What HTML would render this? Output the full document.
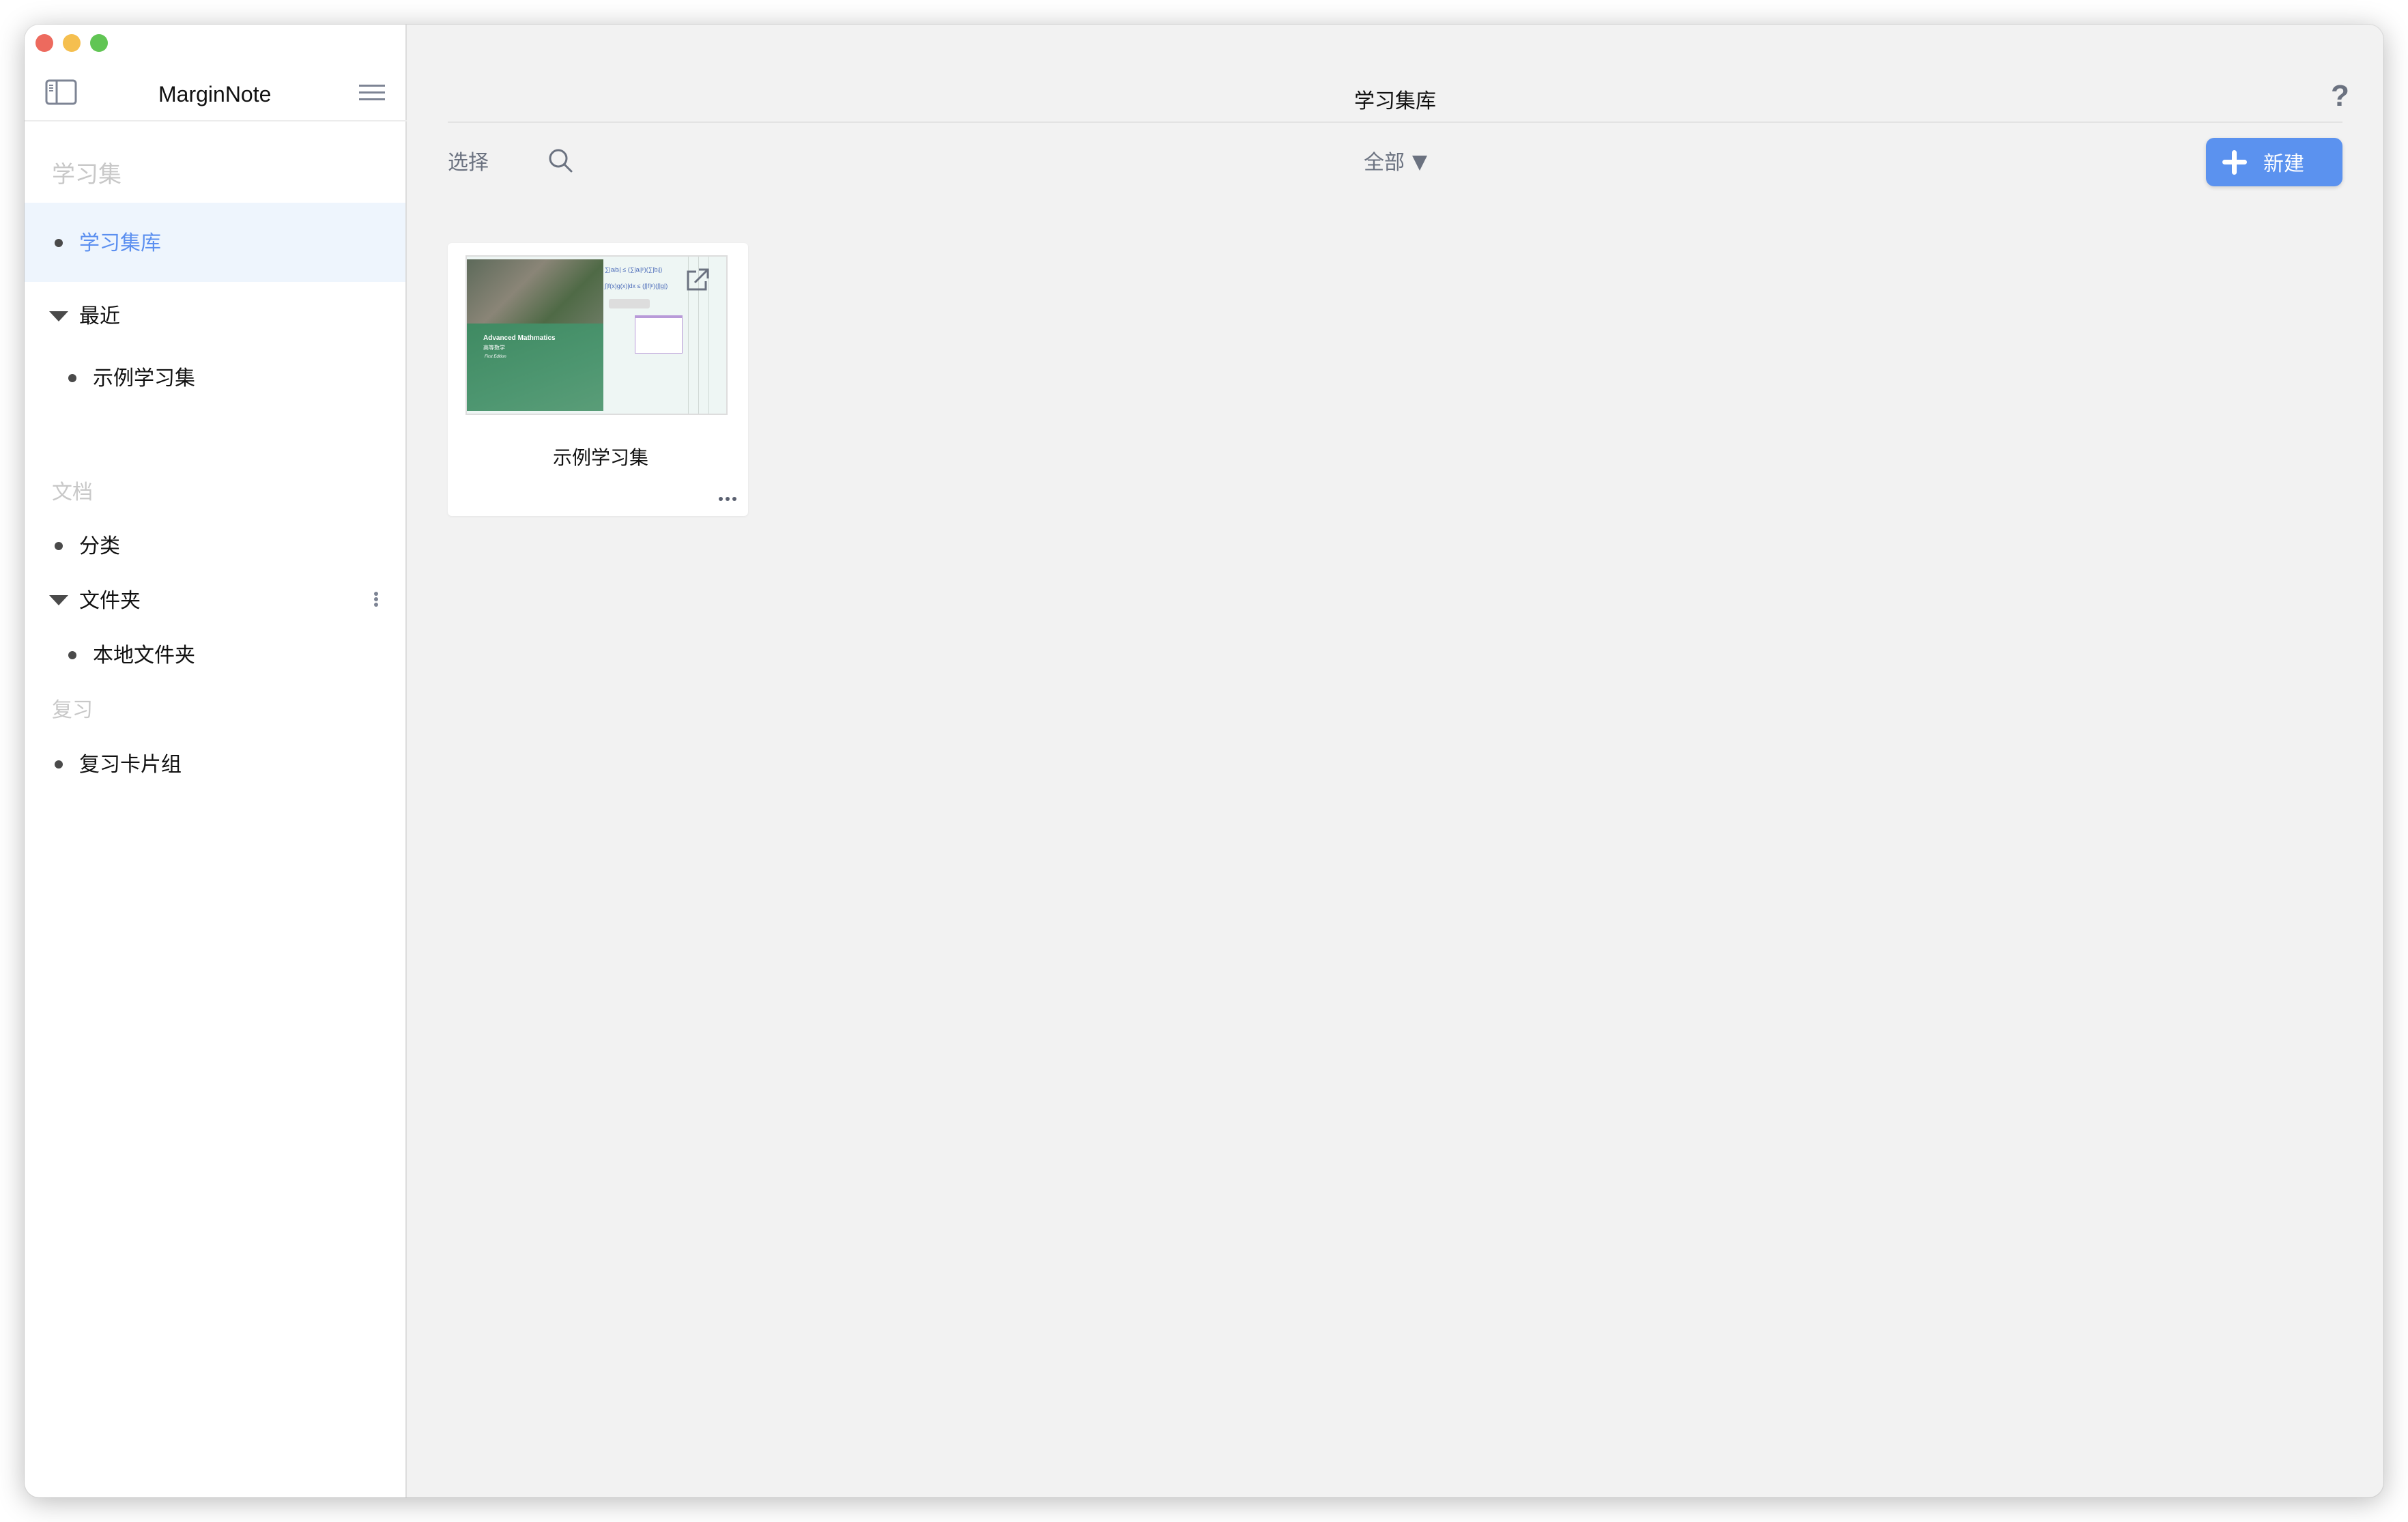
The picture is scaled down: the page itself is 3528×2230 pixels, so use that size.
<!DOCTYPE html>
<html><head><meta charset="utf-8"><style>
*{margin:0;padding:0;box-sizing:border-box}
body{width:3528px;height:2230px;background:#fff;position:relative;overflow:hidden;font-family:"Liberation Sans","Noto Sans CJK SC",sans-serif}
.win{position:absolute;left:36px;top:36px;width:3456px;height:2158px;border-radius:22px;overflow:hidden;background:#f2f2f2;box-shadow:0 6px 40px rgba(0,0,0,.28),0 0 0 1px rgba(0,0,0,.08)}
.side{position:absolute;left:0;top:0;width:560px;height:100%;background:#fff;border-right:2px solid #dcdcdc}
.a{position:absolute;white-space:nowrap}
.dot{position:absolute;width:12px;height:12px;border-radius:50%;background:#4a4a4a}
.tri{position:absolute;width:0;height:0;border-left:14px solid transparent;border-right:14px solid transparent;border-top:15px solid #4a4a4a}
.it{font-size:30px;color:#111}
.hd{font-size:30px;color:#c8c8c8}
.light{position:absolute;width:26px;height:26px;border-radius:50%}
</style></head><body>
<div class="win">
 <div class="side">
  <div class="light" style="left:16px;top:14px;background:#ed6a5e"></div>
  <div class="light" style="left:56px;top:14px;background:#f5bf4f"></div>
  <div class="light" style="left:96px;top:14px;background:#61c554"></div>
  <svg class="a" style="left:30px;top:80px" width="48" height="40" viewBox="0 0 48 40"><rect x="2" y="2" width="43" height="34" rx="4" fill="none" stroke="#7d8494" stroke-width="3"/><line x1="17" y1="2" x2="17" y2="36" stroke="#7d8494" stroke-width="3"/><line x1="6" y1="9" x2="12" y2="9" stroke="#7d8494" stroke-width="2"/><line x1="6" y1="13" x2="12" y2="13" stroke="#7d8494" stroke-width="2"/><line x1="6" y1="17" x2="12" y2="17" stroke="#7d8494" stroke-width="2"/></svg>
  <div class="a" style="left:196px;top:84px;font-size:32px;color:#111">MarginNote</div>
  <svg class="a" style="left:490px;top:86px" width="40" height="28"><rect x="0" y="2" width="38" height="3" fill="#7d8494"/><rect x="0" y="12" width="38" height="3" fill="#7d8494"/><rect x="0" y="22" width="38" height="3" fill="#7d8494"/></svg>
  <div class="a" style="left:0;top:140px;width:560px;height:2px;background:#ececec"></div>
  <div class="a hd" style="left:40px;top:192px;font-size:34px">学习集</div>
  <div class="a" style="left:0;top:261px;width:558px;height:116px;background:#eef5fd"></div>
  <div class="dot" style="left:44px;top:314px"></div>
  <div class="a it" style="left:80px;top:295px;color:#5b8ff0">学习集库</div>
  <div class="tri" style="left:36px;top:420px"></div>
  <div class="a it" style="left:80px;top:402px">最近</div>
  <div class="dot" style="left:64px;top:512px"></div>
  <div class="a it" style="left:100px;top:493px">示例学习集</div>
  <div class="a hd" style="left:40px;top:660px">文档</div>
  <div class="dot" style="left:44px;top:758px"></div>
  <div class="a it" style="left:80px;top:739px">分类</div>
  <div class="tri" style="left:36px;top:836px"></div>
  <div class="a it" style="left:80px;top:819px">文件夹</div>
  <svg class="a" style="left:510px;top:830px" width="10" height="26"><circle cx="5" cy="4" r="3" fill="#7d8494"/><circle cx="5" cy="12" r="3" fill="#7d8494"/><circle cx="5" cy="20" r="3" fill="#7d8494"/></svg>
  <div class="dot" style="left:64px;top:918px"></div>
  <div class="a it" style="left:100px;top:899px">本地文件夹</div>
  <div class="a hd" style="left:40px;top:979px">复习</div>
  <div class="dot" style="left:44px;top:1078px"></div>
  <div class="a it" style="left:80px;top:1059px">复习卡片组</div>
 </div>
 <div class="a" style="left:1948px;top:87px;font-size:30px;color:#111">学习集库</div>
 <div class="a" style="left:3379px;top:80px;font-size:44px;font-weight:bold;color:#6b7280">?</div>
 <div class="a" style="left:620px;top:142px;width:2776px;height:2px;background:#e3e3e3"></div>
 <div class="a" style="left:620px;top:177px;font-size:30px;color:#6b7280">选择</div>
 <svg class="a" style="left:766px;top:180px" width="40" height="40" viewBox="0 0 40 40"><circle cx="16" cy="16" r="12" fill="none" stroke="#6b7280" stroke-width="3"/><line x1="25" y1="25" x2="35" y2="35" stroke="#6b7280" stroke-width="3" stroke-linecap="round"/></svg>
 <div class="a" style="left:1962px;top:177px;font-size:30px;color:#6b7280">全部</div>
 <svg class="a" style="left:2032px;top:190px" width="24" height="26"><path d="M1 2H23L12 24Z" fill="#6b7280"/></svg>
 <div class="a" style="left:3196px;top:166px;width:200px;height:71px;border-radius:12px;background:#5b92ef;box-shadow:0 2px 6px rgba(0,0,0,.15)"></div>
 <svg class="a" style="left:3218px;top:182px" width="40" height="40"><rect x="16" y="2" width="7" height="36" rx="3.5" fill="#fff"/><rect x="2" y="16" width="36" height="7" rx="3.5" fill="#fff"/></svg>
 <div class="a" style="left:3280px;top:179px;font-size:30px;color:#fff">新建</div>
 <div class="a" style="left:620px;top:320px;width:440px;height:400px;background:#fff;border-radius:6px;box-shadow:0 1px 3px rgba(0,0,0,.06)"></div>
 <div class="a" style="left:646px;top:338px;width:384px;height:234px;background:#eef6f4;border:2px solid #ddd;overflow:hidden">
  <div class="a" style="left:0;top:4px;width:200px;height:94px;background:linear-gradient(135deg,#5d6a5a,#8a8577 40%,#4f6a46 70%,#6b7a62)"></div>
  <div class="a" style="left:0;top:98px;width:200px;height:128px;background:linear-gradient(160deg,#3f8a62,#4d9670 60%,#5a9d78)"></div>
  <div class="a" style="left:24px;top:114px;font-size:10px;color:#fff;font-weight:bold">Advanced Mathmatics</div>
  <div class="a" style="left:24px;top:128px;font-size:8px;color:#fff">高等数学</div>
  <div class="a" style="left:26px;top:144px;font-size:6px;color:#fff;font-style:italic">First Edition</div>
  <div class="a" style="left:202px;top:14px;font-size:9px;color:#4a6ab8">∑|aᵢbᵢ| ≤ (∑|aᵢ|ᵖ)(∑|bᵢ|)</div>
  <div class="a" style="left:202px;top:38px;font-size:9px;color:#4a6ab8">∫|f(x)g(x)|dx ≤ (∫|f|ᵖ)(∫|g|)</div>
  <div class="a" style="left:208px;top:62px;width:60px;height:14px;background:#ddd;border-radius:3px"></div>
  <div class="a" style="left:246px;top:86px;width:70px;height:56px;background:#fff;border:1px solid #b89ad8;border-top:4px solid #b89ad8"></div>
  <div class="a" style="left:324px;top:0;width:1px;height:234px;background:#cfd8d4"></div>
  <div class="a" style="left:339px;top:0;width:1px;height:234px;background:#cfd8d4"></div>
  <div class="a" style="left:354px;top:0;width:1px;height:234px;background:#cfd8d4"></div>
  <svg class="a" style="left:320px;top:16px" width="36" height="36"><path d="M16 6H4v26h26V20" fill="none" stroke="#6b7280" stroke-width="3"/><path d="M14 22L32 4M20 3h13v13" fill="none" stroke="#6b7280" stroke-width="3"/></svg>
 </div>
 <div class="a" style="left:774px;top:613px;font-size:28px;color:#111">示例学习集</div>
 <svg class="a" style="left:1016px;top:690px" width="30" height="10"><circle cx="4" cy="5" r="3" fill="#5a6070"/><circle cx="14" cy="5" r="3" fill="#5a6070"/><circle cx="24" cy="5" r="3" fill="#5a6070"/></svg>
</div>
</body></html>
